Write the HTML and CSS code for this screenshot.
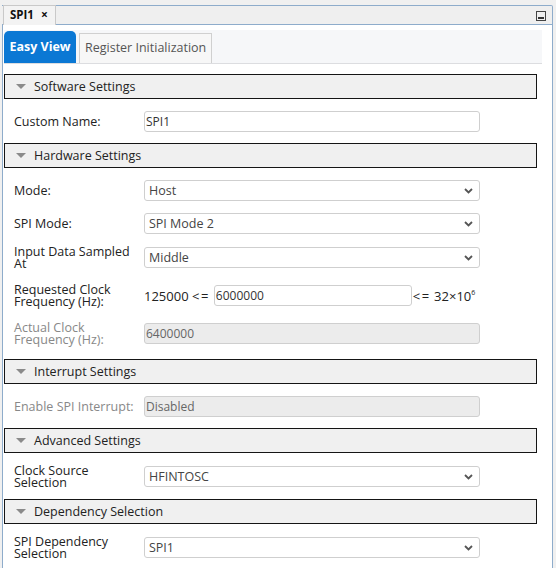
FILE: index.html
```html
<!DOCTYPE html>
<html lang="en">
<head>
    <meta charset="UTF-8">
    <title>SPI1</title>
    <link rel="stylesheet" href="styles.css">
</head>
<body>

<div class="window">
    <div class="titlebar">
        <div class="doc-tab">SPI1 <span class="close">&times;</span></div>
        <div class="minimize"><span></span></div>
    </div>

    <div class="panel">
        <div class="view-tabs">
            <div class="view-tab active">Easy View</div>
            <div class="view-tab">Register Initialization</div>
        </div>

        <!-- Software -->
        <div class="section-head"><span class="caret"></span>Software Settings</div>
        <div class="section-body">
            <div class="row">
                <label>Custom Name:</label>
                <div class="field text">SPI1</div>
            </div>
        </div>

        <!-- Hardware -->
        <div class="section-head"><span class="caret"></span>Hardware Settings</div>
        <div class="section-body">
            <div class="row">
                <label>Mode:</label>
                <div class="field select"><span>Host</span><svg width="9" height="6" viewBox="0 0 9 6"><path d="M1 1l3.5 3.5L8 1" fill="none" stroke="#555" stroke-width="1.8"/></svg></div>
            </div>
            <div class="row">
                <label>SPI Mode:</label>
                <div class="field select"><span>SPI Mode 2</span><svg width="9" height="6" viewBox="0 0 9 6"><path d="M1 1l3.5 3.5L8 1" fill="none" stroke="#555" stroke-width="1.8"/></svg></div>
            </div>
            <div class="row double">
                <label>Input Data Sampled At</label>
                <div class="field select"><span>Middle</span><svg width="9" height="6" viewBox="0 0 9 6"><path d="M1 1l3.5 3.5L8 1" fill="none" stroke="#555" stroke-width="1.8"/></svg></div>
            </div>
            <div class="row double">
                <label>Requested Clock Frequency (Hz):</label>
                <div class="range">
                    <span class="bound">125000 <span class="op">&lt;=</span></span>
                    <div class="field text short">6000000</div>
                    <span class="bound"><span class="op">&lt;=</span> 32&times;10<sup>6</sup></span>
                </div>
            </div>
            <div class="row double disabled">
                <label>Actual Clock Frequency (Hz):</label>
                <div class="field text">6400000</div>
            </div>
        </div>

        <!-- Interrupt -->
        <div class="section-head"><span class="caret"></span>Interrupt Settings</div>
        <div class="section-body">
            <div class="row disabled">
                <label>Enable SPI Interrupt:</label>
                <div class="field text">Disabled</div>
            </div>
        </div>

        <!-- Advanced -->
        <div class="section-head"><span class="caret"></span>Advanced Settings</div>
        <div class="section-body">
            <div class="row double compact">
                <label>Clock Source Selection</label>
                <div class="field select"><span>HFINTOSC</span><svg width="9" height="6" viewBox="0 0 9 6"><path d="M1 1l3.5 3.5L8 1" fill="none" stroke="#555" stroke-width="1.8"/></svg></div>
            </div>
        </div>

        <!-- Dependency -->
        <div class="section-head"><span class="caret"></span>Dependency Selection</div>
        <div class="section-body">
            <div class="row double compact">
                <label>SPI Dependency Selection</label>
                <div class="field select"><span>SPI1</span><svg width="9" height="6" viewBox="0 0 9 6"><path d="M1 1l3.5 3.5L8 1" fill="none" stroke="#555" stroke-width="1.8"/></svg></div>
            </div>
        </div>
    </div>
</div>

</body>
</html>
```

FILE: styles.css
```css
body {
    font-family: "Open Sans", "Noto Sans", sans-serif;
    font-size: 12px;
    color: #222;
    background-color: #f0f0f0;
    margin: 0;
    padding: 0;
    height: 568px;
    overflow: hidden;
}
.window {
    margin: 5px 0 0 2px;
    width: 551px;
}
.titlebar {
    display: flex;
    justify-content: space-between;
    align-items: flex-start;
    height: 18px;
    background-color: #efefef;
    border-top: 1px solid #8eaccb;
    border-bottom: 1px solid #8eaccb;
    border-right: 1px solid #8eaccb;
    border-top-right-radius: 2px;
}
.doc-tab {
    margin: -1px 0 0 1px;
    height: 19px;
    line-height: 18px;
    padding: 0 7px 0 6px;
    background-color: #f3f3f3;
    border: 1px solid #c9c9c9;
    border-bottom: none;
    font-weight: bold;
    font-size: 11.5px;
    color: #111;
}
.doc-tab .close {
    margin-left: 4px;
    font-size: 12px;
}
.minimize {
    margin: 5px 6px 0 0;
    width: 8px;
    height: 7px;
    border: 1px solid #444;
    display: flex;
    align-items: flex-end;
    justify-content: center;
    padding-bottom: 1px;
}
.minimize span {
    width: 6px;
    height: 2px;
    background-color: #333;
}
.panel {
    background-color: #fff;
    border-left: 1px solid #8eaccb;
    border-right: 1px solid #8eaccb;
    height: 560px;
    padding: 5px 0 0 1px;
}
.view-tabs {
    display: flex;
    align-items: flex-end;
    gap: 3px;
    width: 538px;
    height: 33px;
    background-color: #f6f7f9;
    border-bottom: 1px solid #dcdde0;
}
.view-tab {
    height: 30px;
    line-height: 28px;
    padding: 0 5px;
    border: 1px solid #d0d0d0;
    border-bottom: none;
    background-color: #f7f7f7;
    color: #555;
    font-size: 12.5px;
    box-sizing: border-box;
}
.view-tab.active {
    height: 32px;
    line-height: 32px;
    width: 72px;
    padding: 0;
    text-align: center;
    border: none;
    border-radius: 5px 5px 0 0;
    background-color: #0b78d4;
    color: #fff;
    font-weight: bold;
    font-size: 12.5px;
}
.section-head {
    display: flex;
    align-items: center;
    width: 520px;
    height: 23px;
    margin-top: 10px;
    padding-left: 11px;
    border: 1px solid #151515;
    background-color: #f0f0f0;
    font-size: 12.5px;
}
.section-body + .section-head {
    margin-top: 0;
}
.caret {
    width: 0;
    height: 0;
    border-left: 5px solid transparent;
    border-right: 5px solid transparent;
    border-top: 5px solid #8a8a8a;
    margin-right: 8px;
}
.section-body {
    display: flex;
    flex-direction: column;
    gap: 12px;
    padding: 12px 0 11px 10px;
}
.row {
    display: flex;
    align-items: center;
    min-height: 21px;
}
.row label {
    width: 130px;
    flex-shrink: 0;
    line-height: 11.5px;
    font-size: 12.5px;
}
.row.double {
    min-height: 26px;
    align-items: flex-start;
}
.row.double > .field,
.row.double > .range {
    margin-top: 1px;
}
.row.double.compact {
    min-height: 22px;
}
.row.double label {
    width: 118px;
    margin-right: 12px;
}
.field {
    width: 336px;
    height: 21px;
    box-sizing: border-box;
    border: 1px solid #cfcfcf;
    border-radius: 3px;
    background-color: #fff;
    color: #333;
    display: flex;
    align-items: center;
}
.field.text {
    padding-left: 1px;
    font-size: 12px;
}
.field.select {
    justify-content: space-between;
    padding: 0 6px 0 4px;
    font-size: 12.5px;
    color: #444;
}
.disabled label {
    color: #888;
}
.disabled .field {
    background-color: #ececec;
    color: #666;
}
.range {
    display: flex;
    align-items: center;
}
.bound {
    font-size: 13px;
    white-space: nowrap;
}
.bound .op {
    letter-spacing: 1.5px;
}
.field.short {
    width: 198px;
    margin: 0 1px 0 4px;
}
sup {
    font-size: 7px;
    vertical-align: 6px;
}
```
